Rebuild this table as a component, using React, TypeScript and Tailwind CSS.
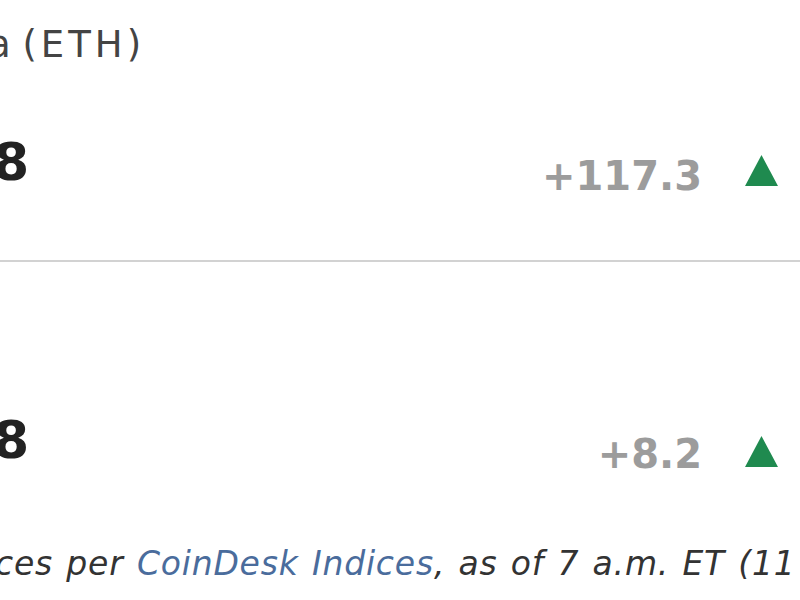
import React from 'react';

type Quote = {
  price: string;
  change: string;
};

const quotes: Quote[] = [
  { price: '8', change: '+117.3' },
  { price: '8', change: '+8.2' },
];

const UpArrow = () => (
  <svg width="33" height="31" viewBox="0 0 33 31" className="shrink-0">
    <polygon points="16.5,0 33,31 0,31" fill="#1f8a4f" />
  </svg>
);

export default function App() {
  return (
    <div className="w-[800px] h-[600px] overflow-hidden bg-white font-['DejaVu_Sans','Verdana',sans-serif]">
      {/* first quote */}
      <div className="h-[260px] flex flex-col">
        <div className="h-[90px] pt-[26px]">
          <span className="block -ml-[12px] whitespace-nowrap text-[37px] leading-none text-[#444]">
            a <span className="tracking-[4px]">(ETH)</span>
          </span>
        </div>
        <div className="flex justify-between items-start pr-[22px]">
          <span className="block -ml-[7px] mt-[46px] text-[52px] leading-none font-bold text-[#222]">
            {quotes[0].price}
          </span>
          <div className="flex items-start gap-[43px] mt-[66px]">
            <span className="text-[40px] leading-none font-bold text-[#9c9c9c]">{quotes[0].change}</span>
            <div className="-mt-[1px]">
              <UpArrow />
            </div>
          </div>
        </div>
      </div>

      <div className="h-[2px] bg-[#d2d2d2]" />

      {/* second quote */}
      <div className="h-[278px] flex justify-between items-start pr-[22px]">
        <span className="block -ml-[7px] mt-[152px] text-[52px] leading-none font-bold text-[#222]">
          {quotes[1].price}
        </span>
        <div className="flex items-start gap-[43px] mt-[172px]">
          <span className="text-[40px] leading-none font-bold text-[#9c9c9c]">{quotes[1].change}</span>
          <div className="mt-[2px]">
            <UpArrow />
          </div>
        </div>
      </div>

      <p className="mt-[7px] -ml-[50px] whitespace-nowrap text-[33px] tracking-[0.8px] [word-spacing:2px] leading-none italic text-[#333]">
        Prices per <span className="text-[#4a6c9c]">CoinDesk Indices</span>, as of 7 a.m. ET (11 a.m. UTC)
      </p>
    </div>
  );
}
